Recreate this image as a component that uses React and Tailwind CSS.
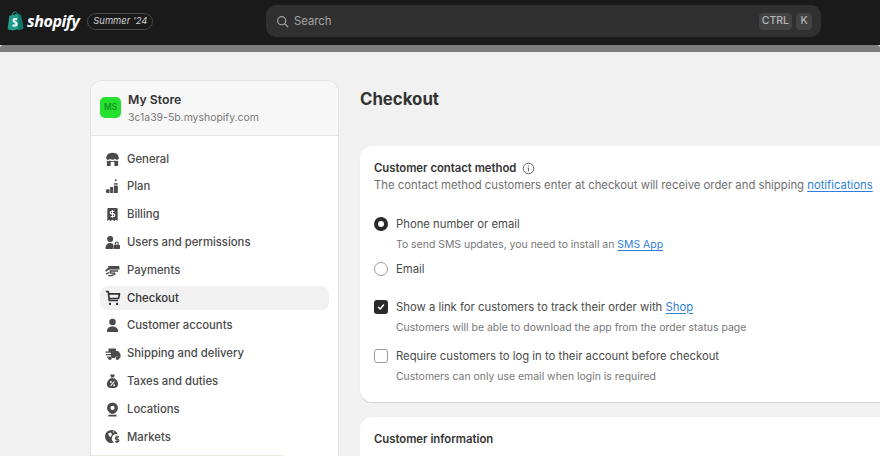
import React from 'react'

const Store = () => (
  <svg viewBox="0 0 16 16" className="w-[15px] h-[15px]" fill="#4a4a4a">
    <path d="M8 .8c3 0 5.200 1 6 3l.8 2.500c0 1.200-1 2-2.100 2-.9 0-1.600-.4-2.100-1-.5.6-1.400 1-2.600 1s-2.100-.4-2.600-1c-.5.6-1.200 1-2.100 1-1.100 0-2.100-.8-2.100-2L2 3.800c.8-2 3-3 6-3z" />
    <path fillRule="evenodd" d="M2 9.400c1 .3 2.400.2 3.200-.4.7.5 1.700.7 2.800.7s2.100-.2 2.800-.7c.8.6 2.200.7 3.200.4V14a1 1 0 0 1-1 1H3a1 1 0 0 1-1-1zM6 11.500V15h4v-3.500a1 1 0 0 0-1-1H7a1 1 0 0 0-1 1z" />
  </svg>
)

const Plan = () => (
  <svg viewBox="0 0 16 16" className="w-[15px] h-[15px]" fill="#4a4a4a">
    <circle cx="11.500" cy="1.300" r="1" />
    <path d="M9.500 4.500h4v1.500h-4z" />
    <path d="M9.500 6.800h4.200V14a1 1 0 0 1-1 1H9.500zM5.500 8.500h3.200V15H5.500zM2.800 11h2V15H2.500A1.500 1.500 0 0 1 1 13.500v-1A1.500 1.500 0 0 1 2.500 11z" />
  </svg>
)

const Billing = () => (
  <svg viewBox="0 0 16 16" className="w-[15px] h-[15px]">
    <path fill="#4a4a4a" d="M3.500 1h9a1 1 0 0 1 1 1v13l-2-1.300L10 15l-2-1.300L6 15l-1.500-1.300L2.500 15V2a1 1 0 0 1 1-1z" />
    <path fill="none" stroke="#fff" strokeWidth="1.200" d="M10 4.500H7a1.200 1.200 0 0 0 0 2.800h2a1.200 1.200 0 0 1 0 2.800H6" />
    <path fill="none" stroke="#fff" strokeWidth="1" d="M8 3.400v8" />
  </svg>
)

const Users = () => (
  <svg viewBox="0 0 16 16" className="w-[15px] h-[15px]" fill="#4a4a4a">
    <circle cx="5.500" cy="4.200" r="3.200" />
    <path d="M0.500 14c0-3.300 2.200-5.500 5-5.500 1.200 0 2.300.4 3.100 1.100V15H1.500a1 1 0 0 1-1-1z" />
    <path d="M10 10.500h5a1 1 0 0 1 1 1V14a1 1 0 0 1-1 1h-5a1 1 0 0 1-1-1v-2.500a1 1 0 0 1 1-1z" />
    <path fill="none" stroke="#4a4a4a" strokeWidth="1.200" d="M11 10.500V9a1.500 1.500 0 0 1 3 0v1.500" />
  </svg>
)

const Payments = () => (
  <svg viewBox="0 0 16 16" className="w-[15px] h-[15px]" fill="none" stroke="#4a4a4a" strokeWidth="1.500" strokeLinecap="round">
    <path d="M4 4.200h10.500M1.200 8.200c1-1.500 2.500-2.200 4.500-2.200h9" strokeWidth="1.800" />
    <path d="M5.500 8.500h8M6 8.800c-.7 1.300-.2 2 1 2h3.500M1.500 11.500 4 10.500M4 13.500c2 .3 4 0 6-1.500" />
  </svg>
)

const Cart = () => (
  <svg viewBox="0 0 16 16" className="w-[16px] h-[16px]" fill="none" stroke="#333" strokeWidth="1.700" strokeLinejoin="round">
    <path d="M.8 1.500h2.500l1 9h8.700" />
    <path d="M3.500 3.800h11l-1 4.700H4.100" />
    <rect x="4" y="12.800" width="2" height="2.200" fill="#333" stroke="none" />
    <rect x="11" y="12.800" width="2" height="2.200" fill="#333" stroke="none" />
  </svg>
)

const Person = () => (
  <svg viewBox="0 0 16 16" className="w-[15px] h-[15px]" fill="#4a4a4a">
    <circle cx="8" cy="4.300" r="3.500" />
    <path d="M2 14c0-3 2.500-5 6-5s6 2 6 5a1 1 0 0 1-1 1H3a1 1 0 0 1-1-1z" />
  </svg>
)

const Truck = () => (
  <svg viewBox="0 0 16 16" className="w-[16px] h-[16px]" fill="#4a4a4a">
    <path d="M3.500 2.500h6.500a1 1 0 0 1 1 1V5h1.800c.4 0 .7.2.9.5l1.800 2.700V11a1 1 0 0 1-1 1h-.6a2 2 0 0 0-3.800 0H6.800A2 2 0 0 0 3 12h-.8v-1.500H6V9.300H1V8h5V6.800H.5V5.500h3z" />
    <circle cx="4.900" cy="12.300" r="1.700" />
    <circle cx="12.500" cy="12.300" r="1.700" />
  </svg>
)

const Taxes = () => (
  <svg viewBox="0 0 16 16" className="w-[15px] h-[15px]">
    <path fill="#4a4a4a" d="M5.500 .5h5l-1 3.300h-3zM6 4.600h4c2.500 1.500 4 4 4 6.400 0 2.500-1.800 4-4.500 4h-3C3.800 15 2 13.500 2 11c0-2.400 1.500-4.900 4-6.400z" />
    <path stroke="#fff" strokeWidth="1.100" d="M10 7.800 6 12.700" />
    <circle cx="6.300" cy="8.500" r="1" fill="#fff" />
    <circle cx="9.700" cy="12" r="1" fill="#fff" />
  </svg>
)

const Pin = () => (
  <svg viewBox="0 0 16 16" className="w-[15px] h-[15px]" fill="#4a4a4a">
    <path fillRule="evenodd" d="M8 .5a5.800 5.800 0 0 1 5.800 5.800c0 2.600-2 4.700-4.300 6.300H6.500C4.200 11 2.200 8.900 2.200 6.300A5.800 5.800 0 0 1 8 .5zm0 3.500a2.300 2.300 0 1 0 0 4.600A2.300 2.300 0 0 0 8 4z" />
    <rect x="3.500" y="13.700" width="9" height="1.800" rx=".9" />
  </svg>
)

const Globe = () => (
  <svg viewBox="0 0 16 16" className="w-[15px] h-[15px]">
    <path fill="#4a4a4a" d="M7 1a7 7 0 0 1 6.500 4.300c-.4-.1-.8-.1-1.300-.1-2.800 0-5 2.200-5 5 0 1.800.9 3.400 2.300 4.300-.8.300-1.600.5-2.500.5A7 7 0 0 1 7 1z" />
    <path fill="#fff" d="M3.500 4.500 6 3.800 7.500 5.500 6 8.500 4.200 7.500zM8 2.200l2 .7-.8 1.300z" />
    <path fill="none" stroke="#4a4a4a" strokeWidth="1.300" d="M15 8.500h-2.600a1.200 1.200 0 0 0 0 2.500h1.200a1.200 1.200 0 0 1 0 2.500H10.800M12.800 7v8" />
  </svg>
)

const navItems = [
  ['General', Store],
  ['Plan', Plan],
  ['Billing', Billing],
  ['Users and permissions', Users],
  ['Payments', Payments],
  ['Checkout', Cart],
  ['Customer accounts', Person],
  ['Shipping and delivery', Truck],
  ['Taxes and duties', Taxes],
  ['Locations', Pin],
  ['Markets', Globe],
]

const Link = ({ children }) => <a className="text-[#2f7fd8] underline underline-offset-2">{children}</a>

const Option = ({ control, label, help, className = '' }) => (
  <div className={className}>
    <div className="flex items-center gap-2 h-5">
      <span className="w-[14px] h-[14px] flex items-center justify-center shrink-0">{control}</span>
      <span className="text-[#4a4a4a] text-[11.3px]">{label}</span>
    </div>
    {help && <p className="ml-[22px] mt-[1px] text-[#777] text-[10.45px] leading-5">{help}</p>}
  </div>
)

const App = () => (
  <div className="w-[880px] h-[456px] overflow-hidden flex flex-col bg-[#f1f1f1]" style={{ fontFamily: 'Inter, sans-serif' }}>
    <header className="h-[45px] shrink-0 bg-[#1a1a1a] flex items-center">
      <div className="w-[266px] shrink-0 flex items-center pl-[7px] mb-[3px]">
        <svg viewBox="0 0 18 21" className="w-[17px] h-5">
          <path fill="#1f9e8c" d="M2.500 5 12 2.800l3.500 15.700-10 2L.6 19.200z" />
          <path fill="#11796a" d="M12 2.800l1.500.6 1.500 1.400 2.600 13.700-6 2z" />
          <path fill="none" stroke="#1f9e8c" strokeWidth="1" d="M5.500 5c0-2.500 1.500-4.200 3-4.200s2.500 1.500 2.500 3.500" />
          <path fill="none" stroke="#fff" strokeWidth="2.200" d="M10.500 8.700c-1.800-.8-3.600-.2-3.600 1.200 0 1.800 3.400 1.700 3.400 3.800 0 1.700-2.300 2.300-4.300 1.200" />
        </svg>
        <span className="ml-[3px] text-white text-[16px] font-bold italic tracking-[-0.4px]" style={{ fontFamily: '"Open Sans", sans-serif' }}>shopify</span>
        <span className="ml-[8px] h-[17px] px-[5px] flex items-center rounded-full border border-[#4a4a4a] text-[#d4d4d4] text-[9.4px] italic">Summer '24</span>
      </div>
      <div className="w-[555px] h-[32px] mb-[3px] rounded-[10px] bg-[#303030] flex items-center pl-[10px] pr-[9px]">
        <svg viewBox="0 0 16 16" className="w-[13px] h-[13px]" fill="none" stroke="#a3a3a3" strokeWidth="1.500" strokeLinecap="round">
          <circle cx="7" cy="7" r="5" />
          <path d="m11 11 3.500 3.500" />
        </svg>
        <span className="ml-[5px] flex-1 text-[#a6a6a6] text-[11.3px]">Search</span>
        <span className="h-[17px] px-[3px] rounded-[4px] bg-[#434343] text-[#b5b5b5] text-[10.5px] font-medium flex items-center">CTRL</span>
        <span className="ml-[4px] h-[17px] w-[16px] justify-center rounded-[4px] bg-[#434343] text-[#b5b5b5] text-[10.5px] font-medium flex items-center">K</span>
      </div>
    </header>
    <div className="h-[7px] shrink-0 bg-[#7d7d7d] rounded-t-[3px]" />

    <main className="flex-1 min-h-0 flex items-start pl-[90px]">
      <aside className="relative w-[249px] h-[376px] shrink-0 mt-[28px] rounded-t-[12px] border border-b-0 border-[#e3e3e3] bg-white">
        <div className="h-[55px] rounded-t-[12px] bg-[#f7f7f7] border-b border-[#e6e6e6] flex items-center pl-[9px]">
          <span className="w-[21px] h-[21px] mb-[2px] rounded-[5px] bg-[#25e12f] text-[#138a24] text-[8.5px] font-medium flex items-center justify-center">MS</span>
          <div className="ml-[7px]">
            <div className="mt-[1px] text-[#333] text-[12.3px] font-semibold leading-[18px]">My Store</div>
            <div className="text-[#777] text-[10.45px] leading-[16px] mt-[1px]">3c1a39-5b.myshopify.com</div>
          </div>
        </div>
        <nav className="pt-[11px] px-[9px] flex flex-col gap-[3.8px]">
          {navItems.map(([label, Icon]) => (
            <div
              key={label}
              className={`h-[24px] flex items-center pl-[5px] rounded-[8px] ${label === 'Checkout' ? 'bg-[#f1f1f1]' : ''}`}
            >
              <span className="w-[17px] flex justify-start shrink-0"><Icon /></span>
              <span className={`ml-[5px] text-[11.3px] font-medium ${label === 'Checkout' ? 'text-[#333]' : 'text-[#4a4a4a]'}`}>{label}</span>
            </div>
          ))}
        </nav>
        <div className="absolute -left-px bottom-0 w-[194px] h-px bg-[#ece8dc]" />
      </aside>

      <section className="ml-[21px] flex-1 min-w-0">
        <h1 className="mt-[37px] text-[#333] text-[16.8px] font-bold leading-5">Checkout</h1>
        <div className="mt-[37px] w-[560px] h-[256px] rounded-[12px] bg-white shadow-[0_1px_1px_#d4d4d4] pt-[14px] pl-[14px]">
          <div className="flex items-center h-[16px]">
            <span className="text-[#333] text-[11.3px] font-semibold">Customer contact method</span>
            <svg viewBox="0 0 16 16" className="ml-[6px] w-[13px] h-[13px]" fill="none" stroke="#555" strokeWidth="1.100">
              <circle cx="8" cy="8" r="6.500" />
              <path d="M8 7.300v4M6.800 7.300H8" />
              <circle cx="8" cy="4.900" r=".7" fill="#555" stroke="none" />
            </svg>
          </div>
          <p className="mt-[1px] text-[#6f6f6f] text-[11.3px] leading-[17px] whitespace-nowrap">
            The contact method customers enter at checkout will receive order and shipping <Link>notifications</Link>
          </p>
          <Option
            className="mt-[20px]"
            control={<span className="w-[14px] h-[14px] rounded-full border-[4px] border-[#2a2a2a] bg-white" />}
            label="Phone number or email"
            help={<>To send SMS updates, you need to install an <Link>SMS App</Link></>}
          />
          <Option
            className="mt-[4px]"
            control={<span className="w-[14px] h-[14px] rounded-full border border-[#9a9a9a] bg-white" />}
            label="Email"
          />
          <Option
            className="mt-[18px]"
            control={
              <span className="w-[14px] h-[14px] rounded-[3px] bg-[#2a2a2a] flex items-center justify-center">
                <svg viewBox="0 0 12 12" className="w-[10px] h-[10px]" fill="none" stroke="#fff" strokeWidth="1.800" strokeLinecap="round" strokeLinejoin="round">
                  <path d="m3 6.300 2 2 4-4.600" />
                </svg>
              </span>
            }
            label={<>Show a link for customers to track their order with <Link>Shop</Link></>}
            help="Customers will be able to download the app from the order status page"
          />
          <Option
            className="mt-[8px]"
            control={<span className="w-[14px] h-[14px] rounded-[3px] border border-[#9a9a9a] bg-white" />}
            label="Require customers to log in to their account before checkout"
            help="Customers can only use email when login is required"
          />
        </div>
        <div className="mt-[15px] w-[560px] h-[60px] rounded-[12px] bg-white pt-[14px] pl-[14px]">
          <div className="text-[#333] text-[11.3px] font-semibold leading-4">Customer information</div>
        </div>
      </section>
    </main>
  </div>
)

export default App
